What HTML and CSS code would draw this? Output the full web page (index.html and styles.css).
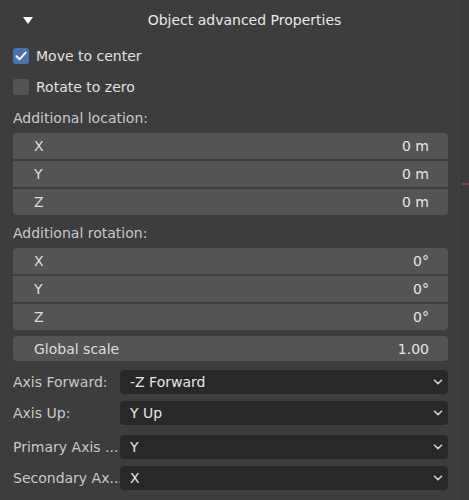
FILE: index.html
```html
<!DOCTYPE html>
<html>
<head>
<meta charset="utf-8">
<link rel="stylesheet" href="styles.css">
</head>
<body>
<div class="panel">
  <div class="header">
    <span class="tri"></span>
    <span class="title">Object advanced Properties</span>
  </div>
  <div class="check-row">
    <span class="box checked"><svg width="16" height="16" viewBox="0 0 16 16"><path d="M3.5 8.3 L6.6 11.3 L12.6 4.6" fill="none" stroke="#fff" stroke-width="2" stroke-linecap="round" stroke-linejoin="round"/></svg></span>
    <span class="check-label">Move to center</span>
  </div>
  <div class="check-row">
    <span class="box"></span>
    <span class="check-label">Rotate to zero</span>
  </div>
  <div class="section-label first">Additional location:</div>
  <div class="field-group">
    <div class="field"><span class="name">X</span><span class="val">0 m</span></div>
    <div class="field"><span class="name">Y</span><span class="val">0 m</span></div>
    <div class="field"><span class="name">Z</span><span class="val">0 m</span></div>
  </div>
  <div class="section-label second">Additional rotation:</div>
  <div class="field-group">
    <div class="field"><span class="name">X</span><span class="val">0°</span></div>
    <div class="field"><span class="name">Y</span><span class="val">0°</span></div>
    <div class="field"><span class="name">Z</span><span class="val">0°</span></div>
  </div>
  <div class="field single"><span class="name">Global scale</span><span class="val">1.00</span></div>

  <div class="prop-row r1">
    <span class="prop-label">Axis Forward:</span>
    <div class="dropdown"><span>-Z Forward</span><svg class="chev" width="10" height="6" viewBox="0 0 10 6"><path d="M1.5 1.2 L5 4.6 L8.5 1.2" fill="none" stroke="#cfcfcf" stroke-width="1.6" stroke-linecap="round" stroke-linejoin="round"/></svg></div>
  </div>
  <div class="prop-row r2">
    <span class="prop-label">Axis Up:</span>
    <div class="dropdown"><span>Y Up</span><svg class="chev" width="10" height="6" viewBox="0 0 10 6"><path d="M1.5 1.2 L5 4.6 L8.5 1.2" fill="none" stroke="#cfcfcf" stroke-width="1.6" stroke-linecap="round" stroke-linejoin="round"/></svg></div>
  </div>
  <div class="prop-row r3">
    <span class="prop-label">Primary Axis ...</span>
    <div class="dropdown"><span>Y</span><svg class="chev" width="10" height="6" viewBox="0 0 10 6"><path d="M1.5 1.2 L5 4.6 L8.5 1.2" fill="none" stroke="#cfcfcf" stroke-width="1.6" stroke-linecap="round" stroke-linejoin="round"/></svg></div>
  </div>
  <div class="prop-row r4">
    <span class="prop-label">Secondary Ax...</span>
    <div class="dropdown"><span>X</span><svg class="chev" width="10" height="6" viewBox="0 0 10 6"><path d="M1.5 1.2 L5 4.6 L8.5 1.2" fill="none" stroke="#cfcfcf" stroke-width="1.6" stroke-linecap="round" stroke-linejoin="round"/></svg></div>
  </div>
</div>
<div class="edge">
  <span class="red-mark"></span>
</div>
</body>
</html>
```

FILE: styles.css
```css
html, body {
  margin: 0;
  padding: 0;
  height: 100%;
}
body {
  background: #3d3d3d;
  display: flex;
  font-family: "DejaVu Sans", "Liberation Sans", sans-serif;
  font-size: 14px;
  color: #e2e2e2;
  overflow: hidden;
}
.panel {
  width: 435px;
  padding: 0 13px;
  flex: none;
  display: flex;
  flex-direction: column;
}
.edge {
  flex: 1;
  background: #3a3a3a;
  border-left: 1px solid #363636;
  position: relative;
}
.red-mark {
  position: absolute;
  left: 0;
  top: 183px;
  width: 8px;
  height: 2px;
  background: #8a3a4a;
}
.header {
  height: 40px;
  display: flex;
  align-items: center;
  position: relative;
}
.tri {
  width: 0;
  height: 0;
  margin-left: 10px;
  border-left: 5px solid transparent;
  border-right: 5px solid transparent;
  border-top: 7px solid #ffffff;
}
.title {
  flex: 1;
  text-align: center;
  margin-left: 8px;
  color: #e8e8e8;
}
.check-row {
  height: 31px;
  display: flex;
  align-items: center;
}
.box {
  width: 16px;
  height: 16px;
  border-radius: 3px;
  background: #545454;
  display: inline-flex;
  margin-right: 7px;
}
.box.checked {
  background: #4772b3;
}
.check-label {
  color: #e0e0e0;
}
.section-label {
  color: #c9c9c9;
  display: flex;
  align-items: center;
}
.section-label.first {
  height: 31px;
}
.section-label.second {
  height: 33px;
  padding-top: 3px;
  box-sizing: border-box;
}
.field-group {
  display: flex;
  flex-direction: column;
  gap: 2px;
  border-radius: 4px;
  overflow: hidden;
}
.field {
  height: 26px;
  background: #545454;
  display: flex;
  align-items: center;
  justify-content: space-between;
  padding: 0 19px 0 21px;
}
.field.single {
  margin-top: 6px;
  height: 25px;
  border-radius: 4px;
}
.name {
  color: #dedede;
}
.val {
  color: #e6e6e6;
}
.prop-row {
  display: flex;
  align-items: center;
  height: 24px;
}
.prop-row.r1 { margin-top: 9px; }
.prop-row.r2 { margin-top: 7px; }
.prop-row.r3 { margin-top: 10px; }
.prop-row.r4 { margin-top: 7px; }
.prop-label {
  width: 107px;
  flex: none;
  color: #c9c9c9;
  white-space: nowrap;
}
.dropdown {
  flex: 1;
  height: 24px;
  background: #282828;
  border-radius: 4px;
  display: flex;
  align-items: center;
  justify-content: space-between;
  padding: 0 5px 0 10px;
  color: #e6e6e6;
}
.chev {
  flex: none;
}
```
